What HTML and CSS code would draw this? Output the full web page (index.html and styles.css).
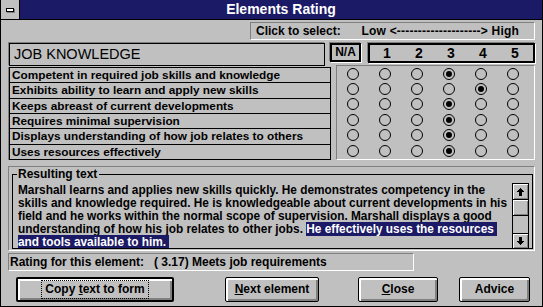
FILE: index.html
```html
<!DOCTYPE html>
<html lang="en">
<head>
    <meta charset="UTF-8">
    <title>Elements Rating</title>
    <link rel="stylesheet" href="styles.css">
</head>
<body>
    <div class="window">
        <div class="titlebar">
            <div class="sysmenu"><span class="sysbar"></span></div>
            <div class="title">Elements Rating</div>
        </div>

        <div class="client">
            <div class="hint-row">
                <div class="hint">
                    <span>Click to select:</span>
                    <span class="range">Low &lt;--------------------&gt; High</span>
                </div>
            </div>

            <div class="head-row">
                <div class="category">JOB KNOWLEDGE</div>
                <div class="na">N/A</div>
                <div class="scale">
                    <span>1</span><span>2</span><span>3</span><span>4</span><span>5</span>
                </div>
            </div>

            <div class="rating-row">
                <ul class="items">
                    <li>Competent in required job skills and knowledge</li>
                    <li>Exhibits ability to learn and apply new skills</li>
                    <li>Keeps abreast of current developments</li>
                    <li>Requires minimal supervision</li>
                    <li>Displays understanding of how job relates to others</li>
                    <li>Uses resources effectively</li>
                </ul>
                <div class="radios" id="radios"></div>
            </div>

            <div class="result-frame">
                <div class="result">
                    <span class="legend">Resulting text</span>
                    <p class="result-text">Marshall learns and applies new skills quickly. He demonstrates competency in the<br>skills and knowledge required. He is knowledgeable about current developments in his<br>field and he works within the normal scope of supervision. Marshall displays a good<br>understanding of how his job relates to other jobs. <mark>He effectively uses the resources&nbsp;</mark><br><mark>and tools available to him.&nbsp;</mark></p>
                    <div class="scrollbar">
                        <div class="arrow up">
                            <svg width="7" height="8" viewBox="0 0 7 8"><path d="M3 0h1v1h1v1h1v1h1v1H5v4H2V4H0V3h1V2h1V1h1z" fill="#000"/></svg>
                        </div>
                        <div class="thumb"></div>
                        <div class="track"></div>
                        <div class="arrow down">
                            <svg width="7" height="8" viewBox="0 0 7 8"><path d="M2 0h3v4h2v1H6v1H5v1H4v1H3V7H2V6H1V5H0V4h2z" fill="#000"/></svg>
                        </div>
                    </div>
                </div>
            </div>

            <div class="status-row">
                <div class="status">Rating for this element:&nbsp;&nbsp;&nbsp;( 3.17) Meets job requirements</div>
            </div>

            <div class="buttons">
                <button class="btn default copy"><span class="focus">Copy <u>t</u>ext to form</span></button>
                <button class="btn next"><u>N</u>ext element</button>
                <button class="btn close"><u>C</u>lose</button>
                <button class="btn advice">Advice</button>
            </div>
        </div>
    </div>

    <script>
        // chosen column for each item (0 = N/A, 1..5 = scale)
        const picks = [3, 4, 3, 3, 3, 3];
        const radios = document.getElementById('radios');

        picks.forEach(pick => {
            for (let col = 0; col < 6; col++) {
                const cell = document.createElement('div');
                cell.className = 'cell';
                const dot = document.createElement('span');
                dot.className = col === pick ? 'radio on' : 'radio';
                cell.appendChild(dot);
                radios.appendChild(cell);
            }
        });
    </script>
</body>
</html>
```

FILE: styles.css
```css
/* Win 3.1 dialog */
* {
    box-sizing: border-box;
}

body {
    margin: 0;
    background-color: #c0c0c0;
    font-family: "Liberation Sans", Arial, sans-serif;
    font-weight: bold;
    font-size: 12px;
    color: #000;
}

.window {
    width: 543px;
    height: 307px;
    border: 1px solid #000;
    border-top: none;
    background-color: #c0c0c0;
    overflow: hidden;
}

.titlebar {
    display: flex;
    height: 20px;
    border-bottom: 1px solid #000;
    background-color: #1b1a66;
}

.sysmenu {
    width: 19px;
    border-right: 1px solid #000;
    background-color: #c0c0c0;
    display: flex;
    align-items: center;
    justify-content: center;
}

.sysbar {
    width: 8px;
    height: 4px;
    background-color: #fff;
    border: 1px solid #000;
    box-shadow: 1px 1px 0 #808080;
}

.title {
    flex: 1;
    text-align: center;
    color: #fff;
    font-size: 14px;
    line-height: 19px;
}

.client {
    padding: 2px 7px 0 7px;
}

/* hint */
.hint-row {
    display: flex;
    justify-content: flex-end;
}

.hint {
    width: 285px;
    height: 18px;
    display: flex;
    justify-content: space-between;
    padding: 0 15px 0 5px;
    border: 1px solid;
    border-color: #808080 #fff #fff #808080;
    line-height: 16px;
}

.range {
    letter-spacing: 0.2px;
}

/* header */
.head-row {
    display: flex;
    margin-top: 2px;
    height: 24px;
}

.category {
    width: 316px;
    height: 23px;
    margin: 1px 0 0 1px;
    border: 1px solid #000;
    box-shadow: -1px -1px 0 #808080;
    font-weight: normal;
    font-size: 14.5px;
    line-height: 21px;
    padding-left: 4px;
}

.na {
    width: 31px;
    height: 19px;
    margin: 1px 0 0 5px;
    border: 2px solid #000;
    box-shadow: -1px -1px 0 #808080, 1px 1px 0 #fff;
    text-align: center;
    line-height: 15px;
}

.scale {
    width: 167px;
    height: 20px;
    margin: 1px 0 0 7px;
    border: 2px solid #000;
    box-shadow: -1px -1px 0 #808080, 1px 1px 0 #fff;
    display: grid;
    grid-template-columns: repeat(5, 32px);
    padding-left: 1px;
    font-size: 14px;
    line-height: 16px;
    text-align: center;
}

/* items + radios */
.rating-row {
    display: flex;
    align-items: flex-start;
}

.items {
    list-style: none;
    margin: 1px 0 0 1px;
    padding: 0;
    width: 322px;
    height: 93px;
    display: grid;
    grid-template-rows: repeat(6, 1fr);
    border: 1px solid #000;
    border-bottom: none;
    box-shadow: -1px 0 0 #808080;
}

.items li {
    border-bottom: 1px solid #000;
    padding-left: 2px;
    font-size: 11.8px;
    line-height: 14px;
    white-space: nowrap;
}

.radios {
    width: 199px;
    height: 95px;
    margin: -1px 0 0 5px;
    border: 1px solid;
    border-color: #808080 #fff #fff #808080;
    display: grid;
    grid-template-columns: repeat(6, 32px);
    grid-template-rows: repeat(6, 15.4px);
}

.cell {
    display: flex;
    align-items: center;
    justify-content: center;
}

.radio {
    width: 12px;
    height: 12px;
    border: 1px solid #000;
    border-radius: 50%;
    display: flex;
    align-items: center;
    justify-content: center;
}

.radio.on::after {
    content: "";
    width: 6px;
    height: 6px;
    border-radius: 50%;
    background-color: #000;
}

/* resulting text */
.result-frame {
    margin-top: 6px;
    height: 85px;
    border: 1px solid;
    border-color: #808080 #fff #fff #808080;
    padding: 7px 1px 0 3px;
}

.result {
    position: relative;
    height: 75px;
    border: 1px solid #000;
    display: flex;
    padding: 9px 3px 0 5px;
}

.legend {
    position: absolute;
    top: -6px;
    left: 4px;
    background-color: #c0c0c0;
    padding: 0 2px 0 1px;
    line-height: 11px;
}

.result-text {
    margin: 0;
    width: 494px;
    font-size: 11.85px;
    line-height: 13px;
    white-space: nowrap;
    overflow: hidden;
}

.result-text mark {
    background-color: #1b1a66;
    color: #fff;
}

.scrollbar {
    width: 17px;
    height: 65px;
    margin: -1px 0 0 0;
    border: 1px solid #000;
    border-bottom: none;
    display: flex;
    flex-direction: column;
}

.arrow,
.thumb {
    height: 16px;
    border-bottom: 1px solid #000;
    box-shadow: inset 1px 1px 0 #fff, inset -1px -1px 0 #808080;
    display: flex;
    align-items: center;
    justify-content: center;
}

.arrow.down {
    height: 15px;
    border-bottom: none;
    border-top: 1px solid #000;
}

.track {
    flex: 1;
}

/* status */
.status-row {
    margin-top: 2px;
}

.status {
    width: 406px;
    height: 18px;
    border: 1px solid;
    border-color: #808080 #fff #fff #808080;
    padding-left: 1px;
    line-height: 16px;
}

/* buttons */
.buttons {
    display: flex;
    margin-top: 6px;
    height: 25px;
}

.btn {
    font-family: inherit;
    font-weight: bold;
    font-size: 12px;
    color: #000;
    height: 25px;
    background-color: #c0c0c0;
    border: 1px solid #000;
    border-radius: 2px;
    box-shadow: inset 1px 1px 0 #fff, inset 2px 2px 0 #fff, inset -1px -1px 0 #808080, inset -2px -2px 0 #808080;
    padding: 0 0 2px 0;
}

.btn.default {
    border-width: 2px;
}

.copy {
    width: 158px;
    margin-left: 8px;
}

.focus {
    border: 1px dotted #000;
    padding: 1px 3px 2px 3px;
}

.next {
    width: 94px;
    margin-left: 51px;
}

.close {
    width: 80px;
    margin-left: 39px;
}

.advice {
    width: 71px;
    margin-left: 21px;
}
```
